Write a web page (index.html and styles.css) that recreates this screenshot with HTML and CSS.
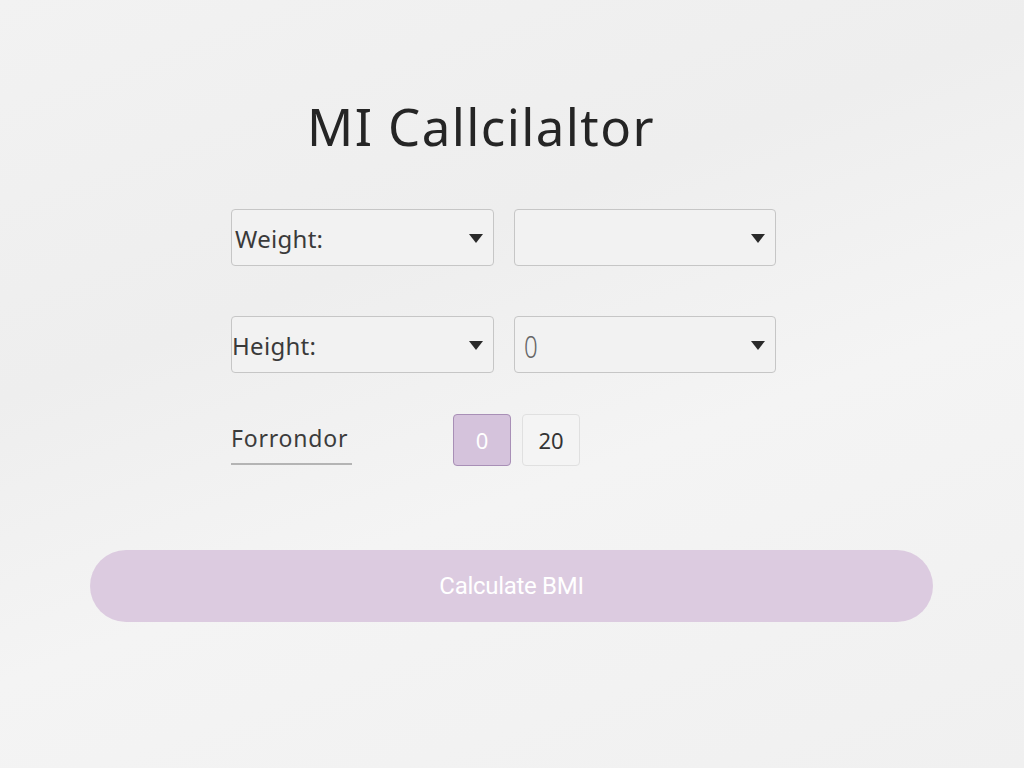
FILE: index.html
```html
<!DOCTYPE html>
<html>
<head>
    <title>BMI Calculator</title>
    <link rel="stylesheet" href="styles.css">
</head>
<body>
    <div class="page">
        <h1 class="title">MI Callcilaltor</h1>

        <div class="form">
            <div class="row">
                <div class="select"><span>Weight:</span><i class="arrow"></i></div>
                <div class="select"><span></span><i class="arrow"></i></div>
            </div>

            <div class="row">
                <div class="select"><span class="tight">Height:</span><i class="arrow"></i></div>
                <div class="select"><span class="thin">0</span><i class="arrow"></i></div>
            </div>

            <div class="units">
                <span class="units-label">Forrondor</span>
                <div class="chips">
                    <div class="chip active">0</div>
                    <div class="chip">20</div>
                </div>
            </div>
        </div>

        <button class="calc">Calculate BMI</button>
    </div>
</body>
</html>
```

FILE: styles.css
```css
body {
    margin: 0;
    height: 768px;
    overflow: hidden;
    font-family: "Noto Sans", sans-serif;
    background: linear-gradient(160deg, #f2f2f2 0%, #eeeeee 35%, #f4f4f4 60%, #f0f0f0 100%);
    color: #2a2a2a;
}
.page {
    padding-top: 94px;
}
.title {
    margin: 0 0 0 307px;
    font-size: 51px;
    font-weight: 400;
    letter-spacing: 1.4px;
    line-height: 64px;
    color: #252525;
}
.form {
    width: 545px;
    margin: 51px 0 0 231px;
}
.row {
    display: flex;
    gap: 20px;
    margin-bottom: 50px;
}
.select {
    flex: 1;
    height: 57px;
    box-sizing: border-box;
    border: 1px solid #c6c6c6;
    border-radius: 4px;
    background: #f2f2f2;
    display: flex;
    align-items: center;
    justify-content: space-between;
    padding: 2px 10px 0 3px;
    font-size: 24px;
    letter-spacing: 0.3px;
    color: #3a3a3a;
}
.select .tight {
    margin-left: -3px;
}
.select .thin {
    margin-left: 6px;
    font-size: 32px;
    font-weight: 300;
    color: #666;
    display: inline-block;
    transform: scaleX(0.75);
    transform-origin: left center;
}
.arrow {
    width: 0;
    height: 0;
    border-left: 7px solid transparent;
    border-right: 7px solid transparent;
    border-top: 9px solid #2a2a2a;
}
.units {
    display: flex;
    align-items: flex-start;
    margin-top: -9px;
}
.units-label {
    width: 121px;
    margin-top: 9px;
    font-size: 23px;
    line-height: 30px;
    letter-spacing: 0.8px;
    color: #3c3c3c;
    padding-bottom: 10px;
    border-bottom: 2px solid #b4b4b4;
}
.chips {
    display: flex;
    gap: 11px;
    margin-left: 101px;
}
.chip {
    width: 58px;
    height: 52px;
    box-sizing: border-box;
    border: 1px solid #e0e0e0;
    border-radius: 4px;
    background: #f4f4f4;
    display: flex;
    align-items: center;
    justify-content: center;
    font-size: 22px;
    color: #333;
}
.chip.active {
    background: #d5c3dc;
    border-color: #a88fb6;
    color: #fff;
}
.calc {
    display: block;
    width: 843px;
    height: 72px;
    margin: 84px 0 0 90px;
    border: none;
    border-radius: 36px;
    background: #dccbe0;
    color: #fff;
    font-family: Roboto, sans-serif;
    font-size: 24px;
    letter-spacing: -0.3px;
}
```
